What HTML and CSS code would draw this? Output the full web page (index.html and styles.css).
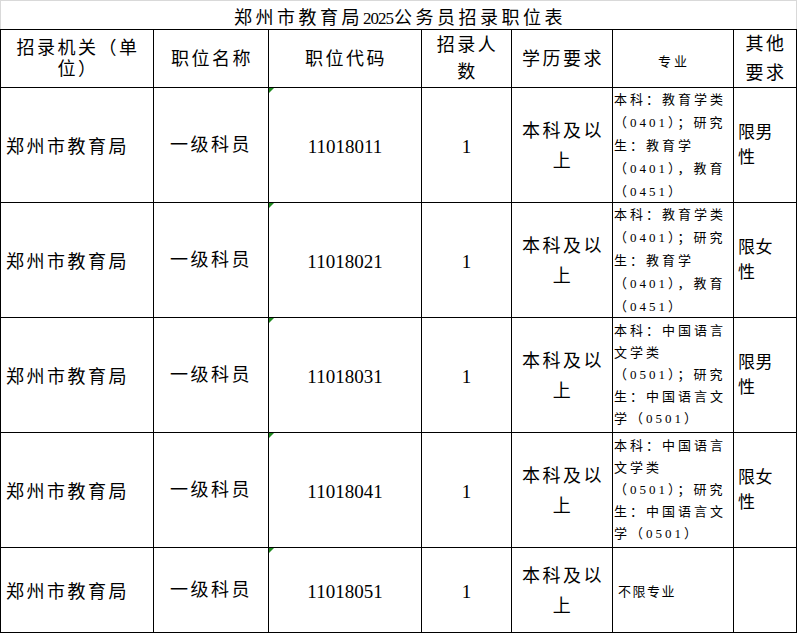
FILE: index.html
```html
<!DOCTYPE html>
<html lang="zh-CN">
<head>
<meta charset="utf-8">
<title>郑州市教育局2025公务员招录职位表</title>
<link rel="stylesheet" href="styles.css">
</head>
<body>
<div class="sheet">
  <div class="title"><span>郑州市教育局<span class="yr">2025</span>公务员招录职位表</span></div>
  <div class="grid">
    <div class="cell head hl1"><span>招录机关（单<br>位）</span></div>
    <div class="cell head"><span>职位名称</span></div>
    <div class="cell head"><span>职位代码</span></div>
    <div class="cell head hl2"><span>招录人<br>数</span></div>
    <div class="cell head"><span>学历要求</span></div>
    <div class="cell head small"><span>专业</span></div>
    <div class="cell head hl3"><span>其他<br>要求</span></div>

    <div class="cell left"><span>郑州市教育局</span></div>
    <div class="cell"><span>一级科员</span></div>
    <div class="cell num flag"><span>11018011</span></div>
    <div class="cell num"><span>1</span></div>
    <div class="cell edu"><span>本科及以<br>上</span></div>
    <div class="cell major"><span>本科：教育学类<br>（0401）；研究<br>生：教育学<br>（0401），教育<br>（0451）</span></div>
    <div class="cell other"><span>限男<br>性</span></div>

    <div class="cell left"><span>郑州市教育局</span></div>
    <div class="cell"><span>一级科员</span></div>
    <div class="cell num flag"><span>11018021</span></div>
    <div class="cell num"><span>1</span></div>
    <div class="cell edu"><span>本科及以<br>上</span></div>
    <div class="cell major"><span>本科：教育学类<br>（0401）；研究<br>生：教育学<br>（0401），教育<br>（0451）</span></div>
    <div class="cell other"><span>限女<br>性</span></div>

    <div class="cell left"><span>郑州市教育局</span></div>
    <div class="cell"><span>一级科员</span></div>
    <div class="cell num flag"><span>11018031</span></div>
    <div class="cell num"><span>1</span></div>
    <div class="cell edu"><span>本科及以<br>上</span></div>
    <div class="cell major tight"><span>本科：中国语言<br>文学类<br>（0501）；研究<br>生：中国语言文<br>学（0501）</span></div>
    <div class="cell other"><span>限男<br>性</span></div>

    <div class="cell left"><span>郑州市教育局</span></div>
    <div class="cell"><span>一级科员</span></div>
    <div class="cell num flag"><span>11018041</span></div>
    <div class="cell num"><span>1</span></div>
    <div class="cell edu"><span>本科及以<br>上</span></div>
    <div class="cell major tight"><span>本科：中国语言<br>文学类<br>（0501）；研究<br>生：中国语言文<br>学（0501）</span></div>
    <div class="cell other"><span>限女<br>性</span></div>

    <div class="cell left"><span>郑州市教育局</span></div>
    <div class="cell"><span>一级科员</span></div>
    <div class="cell num flag"><span>11018051</span></div>
    <div class="cell num"><span>1</span></div>
    <div class="cell edu"><span>本科及以<br>上</span></div>
    <div class="cell major loose"><span>不限专业</span></div>
    <div class="cell other"><span></span></div>
  </div>
</div>
</body>
</html>
```

FILE: styles.css
```css
html, body {
  margin: 0;
  padding: 0;
  background: #fff;
}

body {
  font-family: "Liberation Serif", "Noto Sans CJK SC", serif;
  color: #000;
}

.sheet {
  width: 797px;
}

.title {
  box-sizing: border-box;
  width: 797px;
  height: 29px;
  border: 1px solid #d9d9d9;
  border-bottom: none;
  display: flex;
  align-items: center;
  justify-content: center;
  font-size: 18px;
  letter-spacing: 3.5px;
  padding-left: 3px;
  padding-top: 2px;
}

.title .yr {
  font-size: 17px;
  letter-spacing: -1px;
  margin-right: 1px;
}

.grid {
  display: grid;
  grid-template-columns: 152px 114px 152px 89px 100px 120px 62px;
  grid-template-rows: 57px 114px 114px 114px 114px 84px;
  gap: 1px;
  padding: 1px;
  background: #000;
  width: max-content;
}

.cell {
  position: relative;
  background: #fff;
  display: flex;
  align-items: center;
  justify-content: center;
  text-align: center;
  font-size: 18px;
  letter-spacing: 2.5px;
  line-height: 22px;
  white-space: nowrap;
  overflow: hidden;
}

.cell.head,
.cell.edu {
  padding-left: 2px;
}

.hl1 { line-height: 21px; }
.hl2 { line-height: 27px; }
.hl3 { line-height: 29px; }

.cell.small {
  font-size: 13px;
  letter-spacing: 3px;
  padding-top: 6px;
}

.cell.left {
  justify-content: flex-start;
  text-align: left;
  padding-left: 5px;
  padding-top: 3px;
}

.cell.num {
  font-size: 19px;
  letter-spacing: 0;
  padding-top: 3px;
}

.cell.edu {
  line-height: 30px;
  padding-top: 2px;
}

.cell.major {
  justify-content: flex-start;
  text-align: left;
  font-size: 13px;
  letter-spacing: 3px;
  line-height: 23px;
  padding-left: 1px;
}

.cell.major.tight {
  line-height: 22px;
}

.cell.major.loose {
  letter-spacing: 1.5px;
  padding-left: 5px;
  padding-top: 3px;
}

.cell.other {
  justify-content: flex-start;
  text-align: left;
  font-size: 17px;
  letter-spacing: 0.5px;
  line-height: 25px;
  padding-left: 4px;
}

.cell.flag::before {
  content: "";
  position: absolute;
  left: 0;
  top: 0;
  width: 0;
  height: 0;
  border-top: 5px solid #1f8a1f;
  border-right: 5px solid transparent;
}
```
